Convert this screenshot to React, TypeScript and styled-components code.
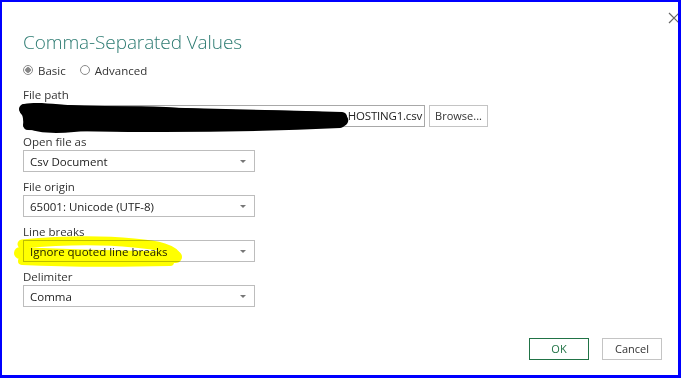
import React from "react";
import styled, { createGlobalStyle } from "styled-components";

const Global = createGlobalStyle`
  html, body { margin: 0; padding: 0; background: #fff; }
  body { font-family: "Open Sans", "Noto Sans", sans-serif; }
`;

const Frame = styled.div`
  position: relative;
  box-sizing: border-box;
  width: 681px;
  height: 378px;
  border-style: solid;
  border-color: #0000ff;
  border-width: 2px 3px 3px 2px;
  background: #fff;
  overflow: hidden;
  display: flex;
  flex-direction: column;
  padding: 26px 16px 15px 21px;
`;

const Close = styled.div`
  position: absolute;
  right: -2px;
  top: 5px;
  width: 12px;
  height: 12px;
`;

const Title = styled.h1`
  margin: 0;
  font-family: "Open Sans", sans-serif;
  font-weight: 300;
  font-size: 19px;
  line-height: 28px;
  color: #2d7b72;
  letter-spacing: -0.1px;
`;

const RadioRow = styled.div`
  display: flex;
  align-items: center;
  gap: 14px;
  margin-top: 6px;
  height: 16px;
`;

const RadioItem = styled.label`
  display: flex;
  align-items: center;
  gap: 5px;
  font-size: 11.5px;
  color: #333;
`;

const RadioDot = styled.span<{ $checked?: boolean }>`
  box-sizing: border-box;
  width: 10px;
  height: 10px;
  border-radius: 50%;
  border: 1px solid #8a8a8a;
  background: ${(p) => (p.$checked ? "radial-gradient(circle, #888 0 2.5px, #fff 3px)" : "#fff")};
`;

const Label = styled.div`
  font-size: 11.5px;
  line-height: 16px;
  color: #333;
  height: 16px;
`;

const Field = styled.div<{ $top: number }>`
  margin-top: ${(p) => p.$top}px;
  display: flex;
  flex-direction: column;
`;

const PathRow = styled.div`
  display: flex;
  gap: 4px;
  margin-top: 2px;
`;

const PathInput = styled.div`
  box-sizing: border-box;
  width: 402px;
  height: 22px;
  border: 1px solid #a8a8a8;
  font-size: 11.5px;
  line-height: 20px;
  color: #222;
  text-align: right;
  padding-right: 2px;
  letter-spacing: -0.2px;
`;

const Button = styled.div<{ $primary?: boolean; $w: number }>`
  box-sizing: border-box;
  width: ${(p) => p.$w}px;
  height: 22px;
  border: 1px solid ${(p) => (p.$primary ? "#217346" : "#c4c4c4")};
  font-size: 11px;
  line-height: 20px;
  color: ${(p) => (p.$primary ? "#217346" : "#333")};
  text-align: center;
  background: #fff;
`;

const Select = styled.div`
  box-sizing: border-box;
  width: 232px;
  height: 22px;
  border: 1px solid #bdbdbd;
  display: flex;
  align-items: center;
  justify-content: space-between;
  padding: 0 8px 0 6px;
  font-size: 11.5px;
  color: #222;
`;

const Arrow = styled.span`
  width: 0;
  height: 0;
  border-left: 3px solid transparent;
  border-right: 3px solid transparent;
  border-top: 3px solid #777;
`;

const Footer = styled.div`
  margin-top: auto;
  display: flex;
  justify-content: flex-end;
  gap: 13px;
`;

const Scribble = styled.svg`
  position: absolute;
  left: 12px;
  top: 97px;
  pointer-events: none;
`;

const Highlight = styled.svg`
  position: absolute;
  left: 12px;
  top: 233px;
  pointer-events: none;
  mix-blend-mode: multiply;
`;

const fields = [
  { label: "Open file as", value: "Csv Document" },
  { label: "File origin", value: "65001: Unicode (UTF-8)" },
  { label: "Line breaks", value: "Ignore quoted line breaks" },
  { label: "Delimiter", value: "Comma" },
];

export default function App() {
  return (
    <>
      <Global />
      <Frame>
        <Close>
          <svg width="12" height="12" viewBox="0 0 12 12">
            <path d="M1 1 L11 11 M11 1 L1 11" stroke="#666" strokeWidth="1.2" />
          </svg>
        </Close>
        <Title>Comma-Separated Values</Title>
        <RadioRow>
          <RadioItem>
            <RadioDot $checked />
            Basic
          </RadioItem>
          <RadioItem>
            <RadioDot />
            Advanced
          </RadioItem>
        </RadioRow>
        <Field $top={9}>
          <Label>File path</Label>
          <PathRow>
            <PathInput>HOSTING1.csv</PathInput>
            <Button $w={59}>Browse...</Button>
          </PathRow>
        </Field>
        {fields.map((f) => (
          <Field key={f.label} $top={7}>
            <Label>{f.label}</Label>
            <Select>
              <span>{f.value}</span>
              <Arrow />
            </Select>
          </Field>
        ))}
        <Footer>
          <Button $primary $w={60}>OK</Button>
          <Button $w={60}>Cancel</Button>
        </Footer>
        <Scribble width="340" height="40" viewBox="0 0 340 40">
          <path
            d="M10 5 C25 2 45 6 70 7 C100 8 130 6 165 9 C200 11 240 11 280 12 C305 13 322 13 330 15
               C336 18 336 26 328 28 C300 30 270 26 240 29 C210 33 180 30 150 32 C120 34 90 30 60 33
               C40 35 20 34 12 28 C8 24 10 20 8 16 C4 12 5 7 10 5 Z"
            fill="#000"
          />
          <g stroke="#000" strokeLinecap="round" fill="none">
            <path d="M10 10 C60 12 200 14 328 18" strokeWidth="10" />
            <path d="M14 26 C80 28 200 30 326 24" strokeWidth="10" />
          </g>
        </Scribble>
        <Highlight width="175" height="34" viewBox="0 0 175 34">
          <g stroke="#ffff00" strokeLinecap="round" fill="none">
            <path d="M8 9 C40 6 80 4 120 8 C145 10 160 14 163 22" strokeWidth="9" />
            <path d="M6 18 C50 20 110 22 162 22" strokeWidth="12" />
            <path d="M8 26 C50 28 110 28 156 27" strokeWidth="8" />
          </g>
        </Highlight>
      </Frame>
    </>
  );
}
